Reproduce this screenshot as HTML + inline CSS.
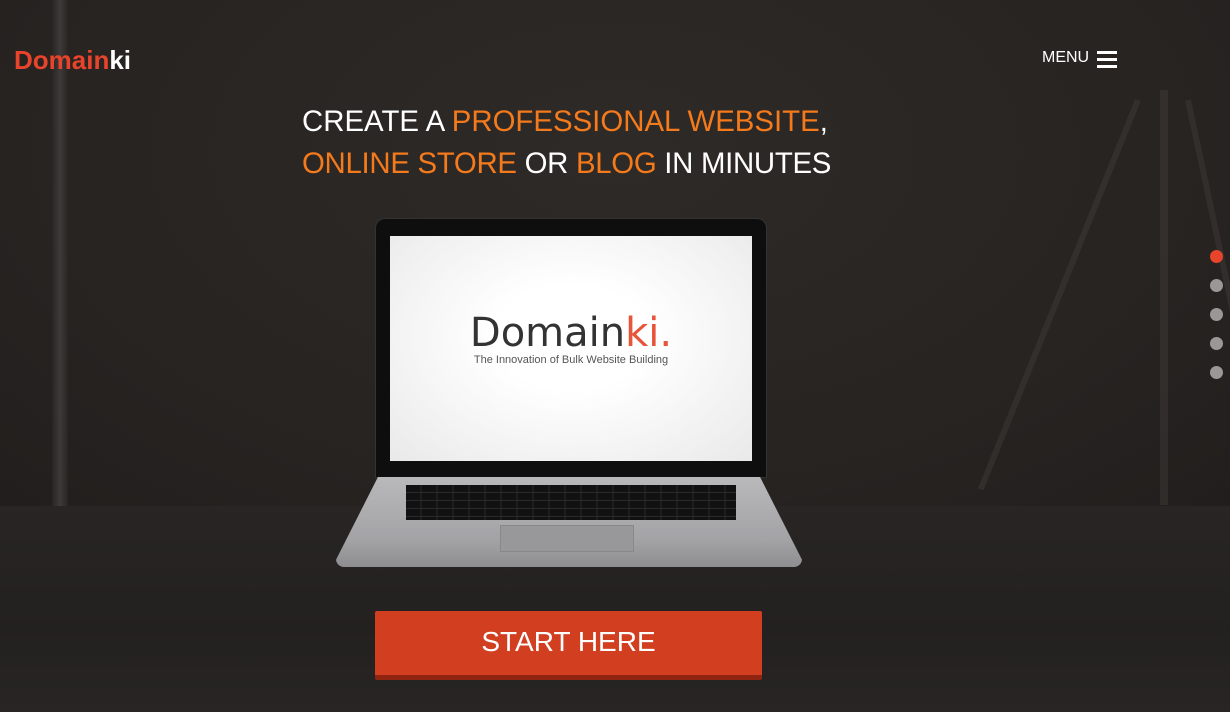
<!DOCTYPE html>
<html><head><meta charset="utf-8"><style>
*{margin:0;padding:0;box-sizing:border-box}
body{width:1230px;height:712px;overflow:hidden;font-family:"Liberation Sans",sans-serif;position:relative;background:#282422}
.wall{position:absolute;left:0;top:0;width:1230px;height:506px;background:radial-gradient(ellipse at 50% 30%,#2e2a28 0%,#272321 70%,#211e1d 100%)}
.floor{position:absolute;left:0;top:506px;width:1230px;height:206px;background:linear-gradient(#282524,#232120 60%,#282524)}
.pole{position:absolute;left:52px;top:0;width:16px;height:506px;background:linear-gradient(90deg,#2a2624,#444040,#2a2624);opacity:.8}
.leg{position:absolute;background:#4a4543;opacity:.35;transform-origin:top}
.logo{position:absolute;left:14px;top:45px;font-size:26px;font-weight:bold;color:#e8432b}
.logo span{color:#fff}
.menu{position:absolute;left:1042px;top:49px;color:#fff;font-size:16px}
.burger{position:absolute;left:1097px;top:51px;width:20px}
.burger i{display:block;height:3px;background:#fff;margin-bottom:4px}
h1{position:absolute;left:302px;top:101px;width:640px;font-weight:normal;font-size:29.4px;line-height:42px;color:#fff}
h1 b{font-weight:normal;color:#f47a1c}
.l2{letter-spacing:-0.3px}
.dot{position:absolute;left:1210px;width:13px;height:13px;border-radius:50%;background:#9a9897}
.lid{position:absolute;left:375px;top:218px;width:392px;height:260px;background:#0e0e0e;border-radius:10px 10px 0 0;border:1px solid #333}
.screen{position:absolute;left:390px;top:236px;width:362px;height:225px;background:radial-gradient(ellipse at 50% 45%,#fff 30%,#e9e9e9 100%)}
.sl{position:absolute;left:0;width:362px;text-align:center}
.base{position:absolute;left:336px;top:477px;width:466px;height:90px;background:linear-gradient(#b9b9bb,#a3a3a6 70%,#8e8e91);clip-path:polygon(9% 0,91% 0,100% 92%,100% 100%,0 100%,0 92%);border-radius:0 0 8px 8px}
.kb{position:absolute;left:406px;top:485px;width:330px;height:35px;background:#111;background-image:repeating-linear-gradient(90deg,#111 0 14px,#1d1d1d 14px 16px),repeating-linear-gradient(#111 0 7px,#2a2a2a 7px 8px);background-blend-mode:lighten}
.tp{position:absolute;left:500px;top:525px;width:134px;height:27px;background:#98989b;border:1px solid #888}
.btn{position:absolute;left:375px;top:611px;width:387px;height:69px;background:#d13e20;border-bottom:5px solid #8f2510;border-radius:2px;color:#fff;font-size:28px;text-align:center;line-height:62px}
</style></head><body>
<div class="wall"></div><div class="floor"></div>
<div class="pole"></div>
<div class="leg" style="left:1160px;top:90px;width:8px;height:415px"></div>
<div class="leg" style="left:1135px;top:100px;width:6px;height:420px;transform:rotate(22deg)"></div>
<div class="leg" style="left:1185px;top:100px;width:6px;height:420px;transform:rotate(-12deg)"></div>
<div class="logo">Domain<span>ki</span></div>
<div class="menu">MENU</div>
<div class="burger"><i></i><i></i><i></i></div>
<h1>CREATE A <b>PROFESSIONAL WEBSITE</b>,<br><span class="l2"><b>ONLINE STORE</b> OR <b>BLOG</b> IN MINUTES</span></h1>
<div class="dot" style="top:250px;background:#e8432b"></div>
<div class="dot" style="top:279px"></div>
<div class="dot" style="top:308px"></div>
<div class="dot" style="top:337px"></div>
<div class="dot" style="top:366px"></div>
<div class="lid"></div>
<div class="screen">
<div class="sl" style="top:74px;font-size:40px;color:#333;font-family:'DejaVu Sans',sans-serif">Domain<span style="color:#e8543a">ki.</span></div>
<div class="sl" style="top:118px;font-size:11px;color:#555">The Innovation of Bulk Website Building</div>
</div>
<div class="base"></div>
<div class="kb"></div>
<div class="tp"></div>
<div class="btn">START HERE</div>
</body></html>
